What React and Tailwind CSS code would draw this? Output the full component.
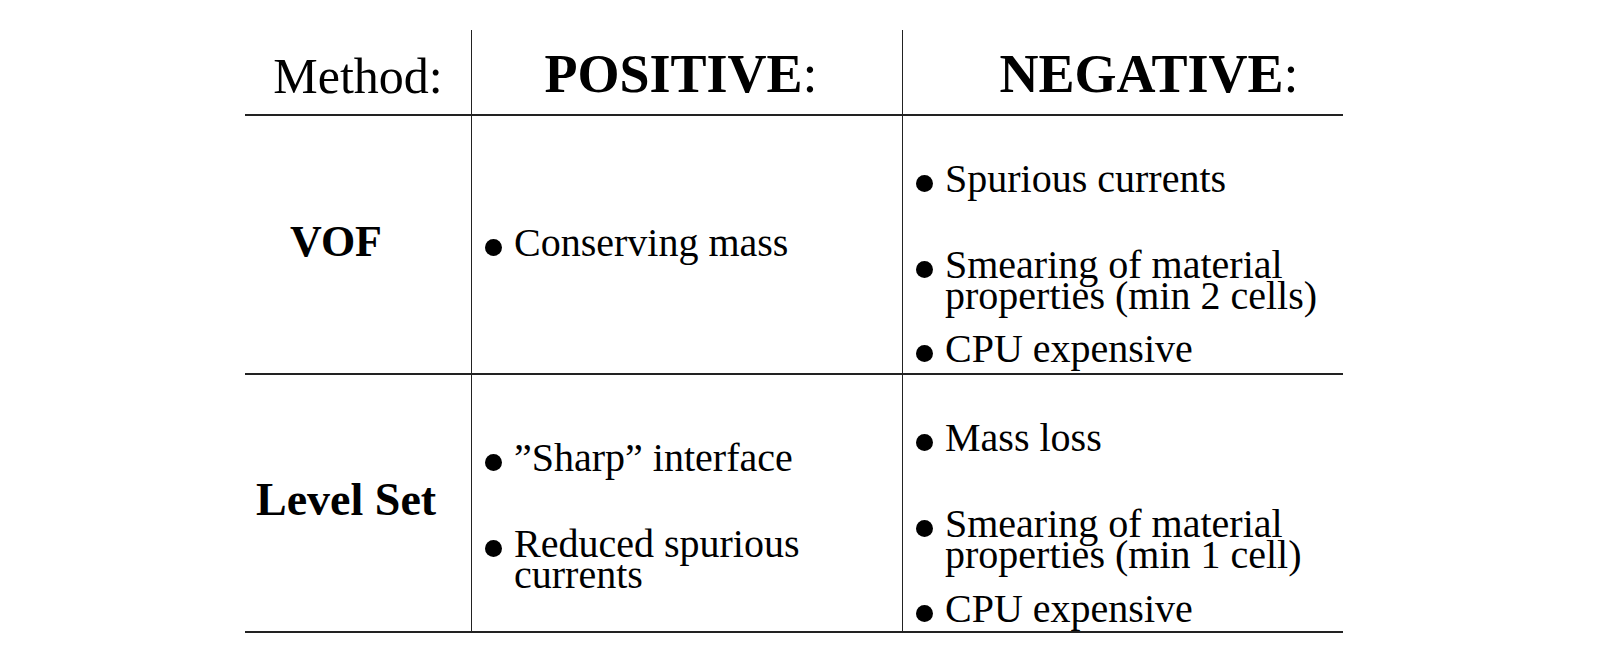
import React from "react";

const Item = ({ lines, className = "" }) => (
  <div className={`flex items-start ${className}`}>
    <span className="mt-[12px] h-[17px] w-[17px] shrink-0 rounded-full bg-black" />
    <div className="ml-[12px] flex flex-col">
      {lines.map((l) => (
        <span key={l} className="whitespace-nowrap">
          {l}
        </span>
      ))}
    </div>
  </div>
);

export default function App() {
  return (
    <div className="min-h-[648px] w-full bg-white pl-[245px] pt-[30px] font-['Liberation_Serif',serif] text-black">
      <div className="grid w-[1098px] grid-cols-[227px_431px_440px]">
        {/* header */}
        <div className="h-[86px] border-b-2 border-r border-[#222] pt-[21px] text-center text-[50px] leading-none">
          Method:
        </div>
        <div className="h-[86px] border-b-2 border-r border-[#222] pr-[12px] pt-[17px] text-center text-[54px] leading-none">
          <span className="font-bold">POSITIVE</span>:
        </div>
        <div className="h-[86px] border-b-2 border-[#222] pl-[52px] pt-[17px] text-center text-[54px] leading-none">
          <span className="font-bold">NEGATIVE</span>:
        </div>

        {/* VOF */}
        <div className="h-[259px] border-b-2 border-r border-[#222] pl-[45px] pt-[104px] text-[44px] font-bold leading-none">
          VOF
        </div>
        <div className="h-[259px] border-b-2 border-r border-[#222] pl-[13px] pt-[111px] text-[40px] leading-[31px]">
          <Item lines={["Conserving mass"]} />
        </div>
        <div className="h-[259px] border-b-2 border-[#222] pl-[13px] pt-[47px] text-[40px] leading-[31px]">
          <Item lines={["Spurious currents"]} />
          <Item className="mt-[55px]" lines={["Smearing of material", "properties (min 2 cells)"]} />
          <Item className="mt-[22px]" lines={["CPU expensive"]} />
        </div>

        {/* Level Set */}
        <div className="h-[258px] border-b-2 border-r border-[#222] pl-[11px] pt-[102px] text-[46px] font-bold leading-none">
          Level Set
        </div>
        <div className="h-[258px] border-b-2 border-r border-[#222] pl-[13px] pt-[67px] text-[40px] leading-[31px]">
          <Item lines={["\u201DSharp\u201D interface"]} />
          <Item className="mt-[55px]" lines={["Reduced spurious", "currents"]} />
        </div>
        <div className="h-[258px] border-b-2 border-[#222] pl-[13px] pt-[47px] text-[40px] leading-[31px]">
          <Item lines={["Mass loss"]} />
          <Item className="mt-[55px]" lines={["Smearing of material", "properties (min 1 cell)"]} />
          <Item className="mt-[23px]" lines={["CPU expensive"]} />
        </div>
      </div>
    </div>
  );
}
